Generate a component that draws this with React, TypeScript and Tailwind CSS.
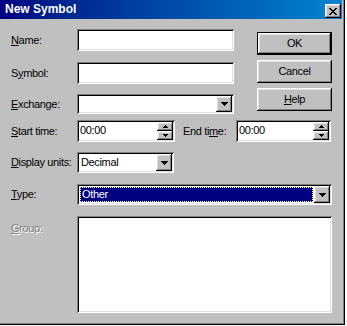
import React from "react";

const SUNKEN =
  "shadow-[inset_1px_1px_0_#808080,inset_-1px_-1px_0_#ffffff,inset_2px_2px_0_#000000,inset_-2px_-2px_0_#dfdfdf]";
const RAISED =
  "shadow-[inset_-1px_-1px_0_#000000,inset_1px_1px_0_#ffffff,inset_-2px_-2px_0_#808080,inset_2px_2px_0_#dfdfdf]";

function Mn({ text, u, className = "" }: { text: string; u: number; className?: string }) {
  return (
    <span className={"whitespace-pre " + className}>
      {text.slice(0, u)}
      <span className="underline decoration-1 underline-offset-[1px]">{text[u]}</span>
      {text.slice(u + 1)}
    </span>
  );
}

function DownArrow() {
  return (
    <svg width="7" height="4" viewBox="0 0 7 4" shapeRendering="crispEdges">
      <rect x="0" y="0" width="7" height="1" fill="#000" />
      <rect x="1" y="1" width="5" height="1" fill="#000" />
      <rect x="2" y="2" width="3" height="1" fill="#000" />
      <rect x="3" y="3" width="1" height="1" fill="#000" />
    </svg>
  );
}

function SmallArrow({ up }: { up?: boolean }) {
  return (
    <svg width="5" height="3" viewBox="0 0 5 3" shapeRendering="crispEdges" className={up ? "" : "rotate-180"}>
      <rect x="2" y="0" width="1" height="1" fill="#000" />
      <rect x="1" y="1" width="3" height="1" fill="#000" />
      <rect x="0" y="2" width="5" height="1" fill="#000" />
    </svg>
  );
}

function DropButton() {
  return (
    <div className={"w-[16px] h-full bg-[#c0c0c0] flex items-center justify-center " + RAISED}>
      <DownArrow />
    </div>
  );
}

function Spinner() {
  return (
    <div className="w-[16px] h-full flex flex-col">
      <div className={"flex-1 bg-[#c0c0c0] flex items-center justify-center " + RAISED}>
        <SmallArrow up />
      </div>
      <div className={"flex-1 bg-[#c0c0c0] flex items-center justify-center " + RAISED}>
        <SmallArrow />
      </div>
    </div>
  );
}

function Edit({ w, value, spin }: { w: string; value?: string; spin?: boolean }) {
  return (
    <div className={"h-[22px] bg-white p-[2px] flex " + w + " " + SUNKEN}>
      <div className="flex-1 pl-[1px] leading-[16px]">{value}</div>
      {spin && <Spinner />}
    </div>
  );
}

function Button({ children, def }: { children: React.ReactNode; def?: boolean }) {
  if (def) {
    return (
      <div className="w-[75px] h-[23px] border border-black">
        <div className={"w-full h-full flex items-center justify-center bg-[#c0c0c0] " + RAISED}>{children}</div>
      </div>
    );
  }
  return (
    <div className={"w-[75px] h-[23px] flex items-center justify-center bg-[#c0c0c0] " + RAISED}>{children}</div>
  );
}

function CloseX() {
  const rows = ["11000011", "01100110", "00111100", "00011000", "00111100", "01100110", "11000011"];
  return (
    <svg width="8" height="7" viewBox="0 0 8 7" shapeRendering="crispEdges">
      {rows.flatMap((r, y) =>
        r.split("").map((c, x) => (c === "1" ? <rect key={x + "-" + y} x={x} y={y} width="1" height="1" fill="#000" /> : null))
      )}
    </svg>
  );
}

export default function App() {
  return (
    <div className="w-[347px] h-[326px] bg-white font-['Liberation_Sans',Arial,sans-serif] text-[11px] tracking-[-0.35px] text-black">
      <div className="w-[345px] h-[325px] bg-[#c0c0c0] shadow-[inset_-1px_-1px_0_#000000,inset_-2px_-2px_0_#808080] pr-[3px] flex flex-col">
        {/* Title bar */}
        <div className="h-[19px] flex justify-between bg-gradient-to-r from-[#000080] to-[#1084d0] pl-[5px] pr-[1px]">
          <div className="text-white font-bold text-[12px] tracking-[0px] leading-[19px] font-['Liberation_Sans',Arial,sans-serif]">New Symbol</div>
          <div className={"mt-[4px] w-[16px] h-[14px] bg-[#c0c0c0] flex items-center justify-center " + RAISED}>
            <CloseX />
          </div>
        </div>

        {/* Body */}
        <div className="pl-[11px] flex flex-col">
          <div className="flex mt-[10px]">
            <div className="flex flex-col">
              <div className="flex items-center h-[22px]">
                <div className="w-[66px]"><Mn text="Name:" u={0} /></div>
                <Edit w="w-[157px]" />
              </div>
              <div className="flex items-center h-[22px] mt-[11px]">
                <div className="w-[66px]"><Mn text="Symbol:" u={1} /></div>
                <Edit w="w-[157px]" />
              </div>
              <div className="flex items-center h-[20px] mt-[10px]">
                <div className="w-[66px]"><Mn text="Exchange:" u={0} /></div>
                <div className={"w-[157px] h-[20px] bg-white p-[2px] flex justify-end " + SUNKEN}>
                  <DropButton />
                </div>
              </div>
            </div>
            <div className="flex flex-col ml-[23px] mt-[3px] gap-[5px]">
              <Button def>OK</Button>
              <Button>Cancel</Button>
              <Button><Mn text="Help" u={0} /></Button>
            </div>
          </div>

          {/* Start / End time */}
          <div className="flex items-center h-[22px] mt-[6px]">
            <div className="w-[66px]"><Mn text="Start time:" u={0} /></div>
            <Edit w="w-[98px]" value="00:00" spin />
            <div className="w-[53px] ml-[8px]"><Mn text="End time:" u={6} /></div>
            <Edit w="w-[95px]" value="00:00" spin />
          </div>

          {/* Display units */}
          <div className="flex items-center h-[21px] mt-[10px]">
            <div className="w-[66px]"><Mn text="Display units:" u={0} /></div>
            <div className={"w-[97px] h-[21px] bg-white p-[2px] flex " + SUNKEN}>
              <div className="flex-1 pl-[2px] leading-[17px]">Decimal</div>
              <DropButton />
            </div>
          </div>

          {/* Type */}
          <div className="flex items-center h-[21px] mt-[11px]">
            <div className="w-[66px]"><Mn text="Type:" u={0} /></div>
            <div className={"w-[255px] h-[21px] bg-white p-[2px] flex " + SUNKEN}>
              <div className="flex-1 m-[1px] bg-[#000080] border border-dotted border-[#ffff80] text-white leading-[13px] pl-[1px]">
                Other
              </div>
              <DropButton />
            </div>
          </div>

          {/* Group */}
          <div className="flex mt-[11px]">
            <div className="w-[66px] mt-[4px] text-[#808080] [text-shadow:1px_1px_0_#ffffff]">
              <Mn text="Group:" u={0} />
            </div>
            <div className={"w-[255px] h-[97px] bg-white " + SUNKEN} />
          </div>
        </div>
      </div>
    </div>
  );
}
